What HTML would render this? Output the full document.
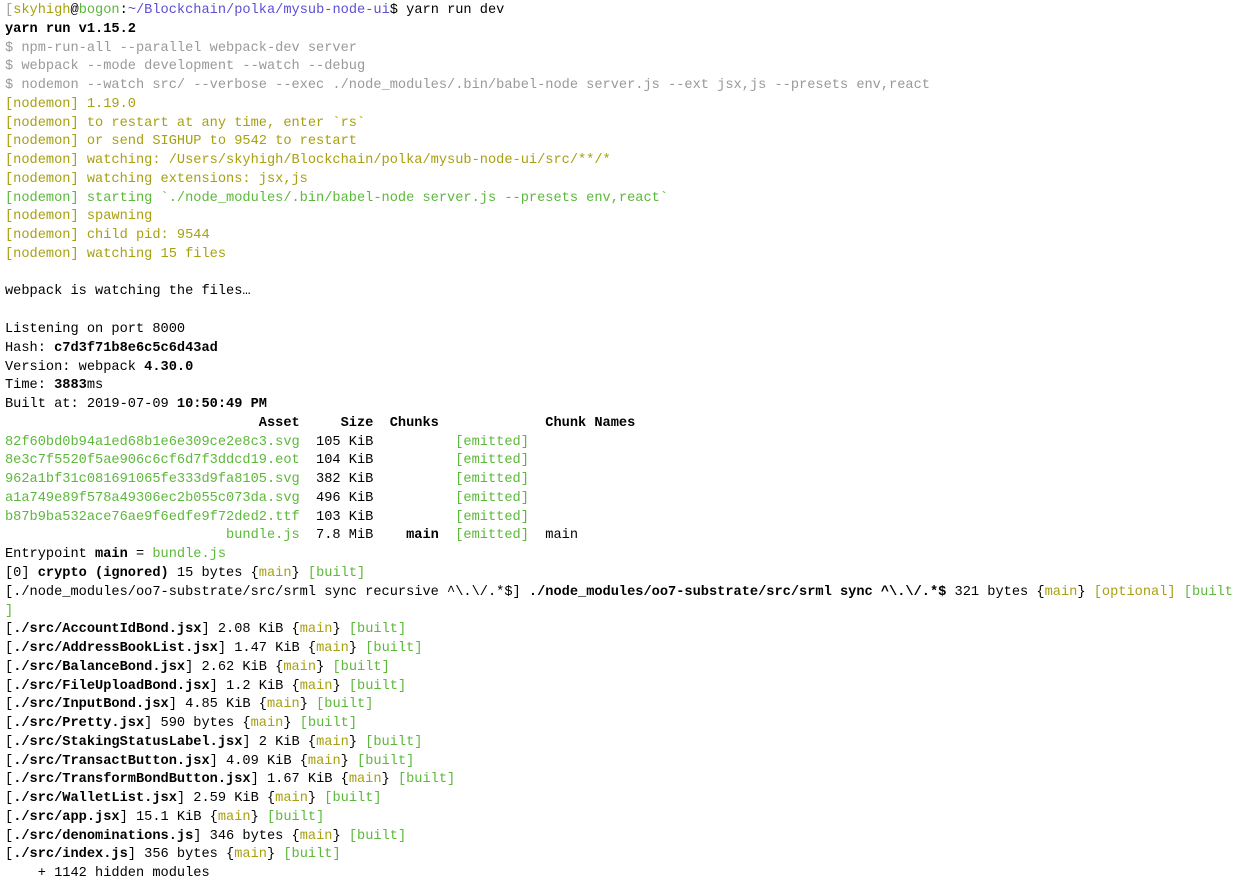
<!DOCTYPE html>
<html><head><meta charset="utf-8"><style>
html,body{margin:0;padding:0;background:#fff;width:1240px;height:883px;overflow:hidden}
pre{margin:0;padding:2px 0 0 5px;font-family:"Liberation Mono",monospace;font-size:13.65px;line-height:18.76px;color:#000;white-space:pre}
.g{color:#999}.y{color:#a8a010}.n{color:#5cb83a}.p{color:#5a4fd6}.b{font-weight:bold}.lg{color:#a0a0a0}
</style></head><body><pre><span class="lg">[</span><span class="y">skyhigh</span>@<span class="n">bogon</span>:<span class="p">~/Blockchain/polka/mysub-node-ui</span>$ yarn run dev
<span class="b">yarn run v1.15.2</span>
<span class="g">$ npm-run-all --parallel webpack-dev server</span>
<span class="g">$ webpack --mode development --watch --debug</span>
<span class="g">$ nodemon --watch src/ --verbose --exec ./node_modules/.bin/babel-node server.js --ext jsx,js --presets env,react</span>
<span class="y">[nodemon] 1.19.0</span>
<span class="y">[nodemon] to restart at any time, enter `rs`</span>
<span class="y">[nodemon] or send SIGHUP to 9542 to restart</span>
<span class="y">[nodemon] watching: /Users/skyhigh/Blockchain/polka/mysub-node-ui/src/**/*</span>
<span class="y">[nodemon] watching extensions: jsx,js</span>
<span class="n">[nodemon] starting `./node_modules/.bin/babel-node server.js --presets env,react`</span>
<span class="y">[nodemon] spawning</span>
<span class="y">[nodemon] child pid: 9544</span>
<span class="y">[nodemon] watching 15 files</span>

webpack is watching the files…

Listening on port 8000
Hash: <span class="b">c7d3f71b8e6c5c6d43ad</span>
Version: webpack <span class="b">4.30.0</span>
Time: <span class="b">3883</span>ms
Built at: 2019-07-09 <span class="b">10:50:49 PM</span>
<span class="b">                               Asset     Size  Chunks             Chunk Names</span>
<span class="n">82f60bd0b94a1ed68b1e6e309ce2e8c3.svg</span>  105 KiB          <span class="n">[emitted]</span>
<span class="n">8e3c7f5520f5ae906c6cf6d7f3ddcd19.eot</span>  104 KiB          <span class="n">[emitted]</span>
<span class="n">962a1bf31c081691065fe333d9fa8105.svg</span>  382 KiB          <span class="n">[emitted]</span>
<span class="n">a1a749e89f578a49306ec2b055c073da.svg</span>  496 KiB          <span class="n">[emitted]</span>
<span class="n">b87b9ba532ace76ae9f6edfe9f72ded2.ttf</span>  103 KiB          <span class="n">[emitted]</span>
<span class="n">                           bundle.js</span>  7.8 MiB    <span class="b">main</span>  <span class="n">[emitted]</span>  main
Entrypoint <span class="b">main</span> = <span class="n">bundle.js</span>
[0] <span class="b">crypto (ignored)</span> 15 bytes {<span class="y">main</span>} <span class="n">[built]</span>
[./node_modules/oo7-substrate/src/srml sync recursive ^\.\/.*$] <span class="b">./node_modules/oo7-substrate/src/srml sync ^\.\/.*$</span> 321 bytes {<span class="y">main</span>} <span class="y">[optional]</span> <span class="n">[built</span>
<span class="n">]</span>
[<span class="b">./src/AccountIdBond.jsx</span>] 2.08 KiB {<span class="y">main</span>} <span class="n">[built]</span>
[<span class="b">./src/AddressBookList.jsx</span>] 1.47 KiB {<span class="y">main</span>} <span class="n">[built]</span>
[<span class="b">./src/BalanceBond.jsx</span>] 2.62 KiB {<span class="y">main</span>} <span class="n">[built]</span>
[<span class="b">./src/FileUploadBond.jsx</span>] 1.2 KiB {<span class="y">main</span>} <span class="n">[built]</span>
[<span class="b">./src/InputBond.jsx</span>] 4.85 KiB {<span class="y">main</span>} <span class="n">[built]</span>
[<span class="b">./src/Pretty.jsx</span>] 590 bytes {<span class="y">main</span>} <span class="n">[built]</span>
[<span class="b">./src/StakingStatusLabel.jsx</span>] 2 KiB {<span class="y">main</span>} <span class="n">[built]</span>
[<span class="b">./src/TransactButton.jsx</span>] 4.09 KiB {<span class="y">main</span>} <span class="n">[built]</span>
[<span class="b">./src/TransformBondButton.jsx</span>] 1.67 KiB {<span class="y">main</span>} <span class="n">[built]</span>
[<span class="b">./src/WalletList.jsx</span>] 2.59 KiB {<span class="y">main</span>} <span class="n">[built]</span>
[<span class="b">./src/app.jsx</span>] 15.1 KiB {<span class="y">main</span>} <span class="n">[built]</span>
[<span class="b">./src/denominations.js</span>] 346 bytes {<span class="y">main</span>} <span class="n">[built]</span>
[<span class="b">./src/index.js</span>] 356 bytes {<span class="y">main</span>} <span class="n">[built]</span>
    + 1142 hidden modules
</pre></body></html>
